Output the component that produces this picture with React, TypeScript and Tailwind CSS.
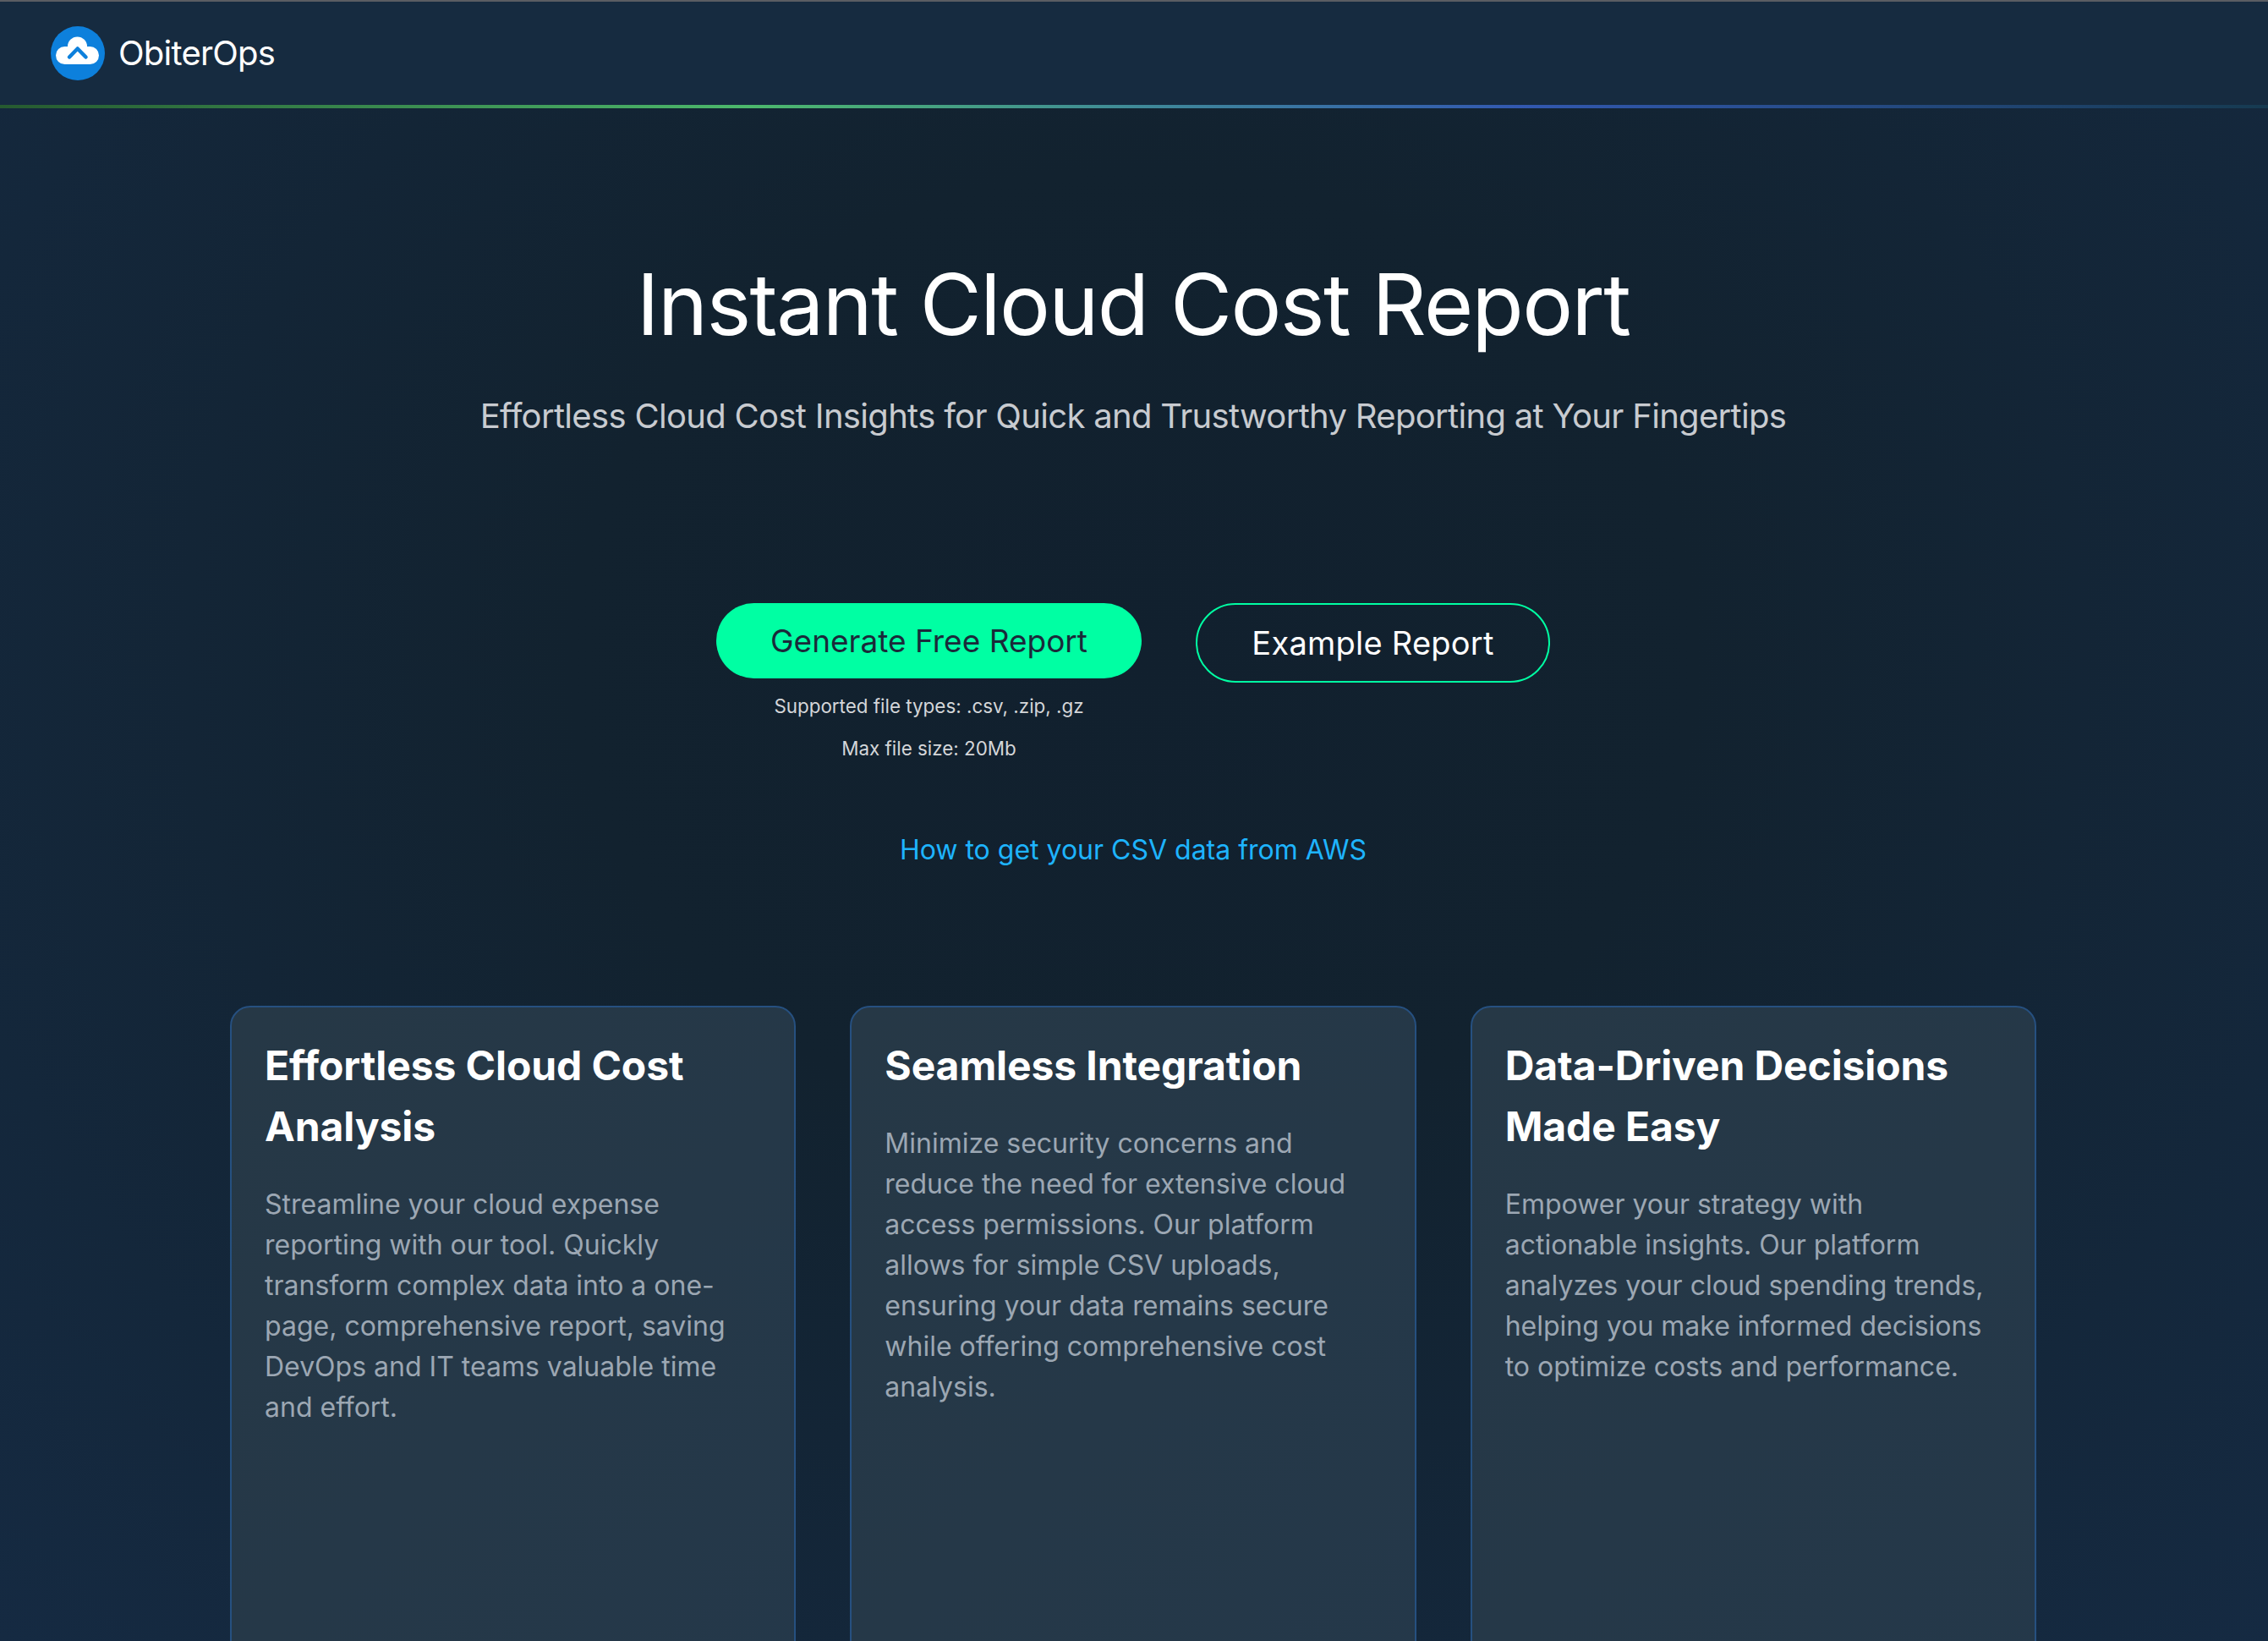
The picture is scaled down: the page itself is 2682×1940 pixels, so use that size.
import React from 'react';

const cards = [
  {
    title: 'Effortless Cloud Cost Analysis',
    text: 'Streamline your cloud expense reporting with our tool. Quickly transform complex data into a one-page, comprehensive report, saving DevOps and IT teams valuable time and effort.',
  },
  {
    title: 'Seamless Integration',
    text: 'Minimize security concerns and reduce the need for extensive cloud access permissions. Our platform allows for simple CSV uploads, ensuring your data remains secure while offering comprehensive cost analysis.',
  },
  {
    title: 'Data-Driven Decisions Made Easy',
    text: 'Empower your strategy with actionable insights. Our platform analyzes your cloud spending trends, helping you make informed decisions to optimize costs and performance.',
  },
];

const Logo = () => (
  <svg width="64" height="64" viewBox="0 0 64 64">
    <circle cx="32" cy="32" r="32" fill="#0d80dc" />
    <g fill="#fff">
      <circle cx="16.5" cy="34.5" r="10.5" />
      <circle cx="46.5" cy="34.5" r="10.5" />
      <circle cx="31.5" cy="24" r="11.5" />
      <rect x="16.5" y="24" width="30" height="21" />
    </g>
    <path d="M22 36.5 L31.7 26.5 L41.5 36.5" fill="none" stroke="#0d80dc" strokeWidth="4.5" strokeLinecap="round" strokeLinejoin="round" />
  </svg>
);

export default function App() {
  return (
    <div className="h-[1940px] overflow-hidden border-t-2 border-[#5a5d63] bg-[radial-gradient(ellipse_at_50%_40%,#11202e_0%,#12222f_35%,#152a42_100%)] font-['Inter','Noto_Sans',sans-serif] text-white">
      <header className="flex h-[122px] items-center bg-[#162b40] pl-[60px]">
        <Logo />
        <span className="ml-[16px] text-[40px] leading-[60px] tracking-[-0.76px]">ObiterOps</span>
      </header>
      <div className="h-[4px] bg-[linear-gradient(90deg,#265a30_0%,#4cb86c_33%,#3f8a98_50%,#3258b0_67%,#163a50_100%)]" />

      <main className="flex flex-col items-center pr-[2px]">
        <h1 className="mt-[172px] text-[100px] leading-[120px] font-normal tracking-[-1.6px]">Instant Cloud Cost Report</h1>
        <p className="mt-[42px] text-[40px] leading-[60px] tracking-[-0.68px] text-[#c8cbd0]">
          Effortless Cloud Cost Insights for Quick and Trustworthy Reporting at Your Fingertips
        </p>

        <div className="mt-[191px] flex items-start gap-[64px]">
          <div className="flex flex-col items-center">
            <button className="flex h-[89px] w-[503px] items-center justify-center rounded-full bg-[#00ffa3] text-[37px] text-[#1a2a3a]">
              Generate Free Report
            </button>
            <p className="mt-[15px] text-[22.4px] leading-[36px] text-[#d4d6d9]">Supported file types: .csv, .zip, .gz</p>
            <p className="mt-[14px] text-[22.4px] leading-[36px] text-[#d4d6d9]">Max file size: 20Mb</p>
          </div>
          <button className="flex h-[94px] w-[419px] items-center justify-center rounded-full border-2 border-[#00ffa3] text-[38px] tracking-[0.24px] text-white">
            Example Report
          </button>
        </div>

        <a className="mt-[77px] text-[32px] leading-[50px] text-[#1eb4ff]">How to get your CSV data from AWS</a>

        <section className="mt-[159px] grid w-[2136px] grid-cols-3 gap-[64px]">
          {cards.map((card) => (
            <div key={card.title} className="h-[900px] rounded-[24px] border-2 border-[#265080] bg-[linear-gradient(135deg,#263846,#24384a)] pr-[46px] pl-[39px] pt-[33px]">
              <h3 className="text-[48px] leading-[72px] font-bold tracking-[-0.1px] text-white">{card.title}</h3>
              <p className="mt-[32px] text-[32px] leading-[48px] text-[#9ca7b3]">{card.text}</p>
            </div>
          ))}
        </section>
      </main>
    </div>
  );
}
